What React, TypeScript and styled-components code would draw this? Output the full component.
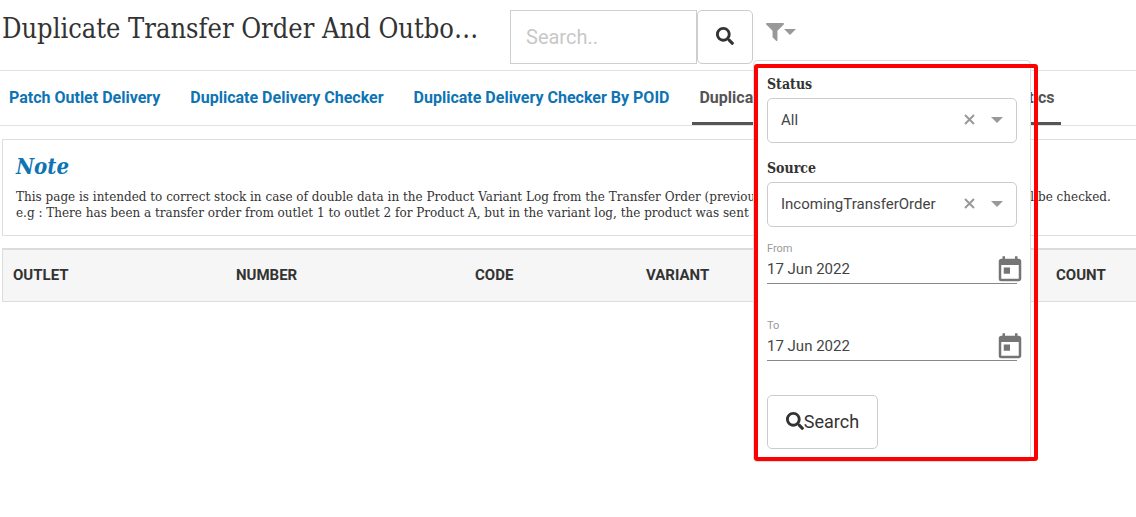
import React, { useState } from 'react';
import styled, { createGlobalStyle } from 'styled-components';
import { MdToday } from 'react-icons/md';

const slab = `'Roboto Slab', 'DejaVu Serif', serif`;
const slabCondensed = `'Roboto Slab', 'DejaVu Serif Condensed', 'DejaVu Serif', serif`;
const sans = `Roboto, 'Liberation Sans', sans-serif`;

const GlobalStyle = createGlobalStyle`
  *, *::before, *::after { box-sizing: border-box; }
  body {
    margin: 0;
    min-height: 100vh;
    background: #fff;
    color: #333;
    font-family: ${sans};
  }
  button, input, select { font-family: inherit; color: inherit; margin: 0; }
  button { cursor: pointer; }
`;

const Header = styled.header`
  display: flex;
  align-items: flex-start;
  height: 71px;
  padding: 10px 0 0 2px;
  border-bottom: 1px solid #e0e1e2;
`;

const Title = styled.h1`
  flex: 0 1 484px;
  min-width: 0;
  margin: 0 24px 0 0;
  font: 400 27px/38px ${slabCondensed};
  overflow: hidden;
  white-space: nowrap;
  text-overflow: ellipsis;
`;

const SearchForm = styled.form`
  display: flex;
  flex: none;
  height: 54px;
`;

const SearchInput = styled.input`
  width: 187px;
  padding: 0 15px;
  border: 1px solid #ccd0d5;
  border-radius: 0;
  background: #fff;
  font-size: 20px;
  outline: none;
  &::placeholder { color: #c8c8c8; opacity: 1; }
`;

const Button = styled.button`
  display: flex;
  align-items: center;
  justify-content: center;
  width: 56px;
  height: 54px;
  padding: 0 0 2px;
  border: 1px solid #ccc;
  border-radius: 5px;
  background: #fff;
  font-size: 18px;
`;

const ApplyButton = styled(Button)`
  width: 111px;
  margin-top: 14px;
`;

const FilterMenu = styled.div`
  position: relative;
  flex: none;
  margin-left: 13px;
`;

const FilterToggle = styled.button`
  display: flex;
  align-items: center;
  height: 44px;
  padding: 0;
  border: 0;
  background: none;
  color: #999;
`;

const Panel = styled.div`
  position: absolute;
  top: 50px;
  left: -13px;
  z-index: 2;
  width: 278px;
  padding: 15px 13px 12px;
  border: 1px solid #ddd;
  border-radius: 4px;
  background: #fff;
`;

const Highlight = styled.div`
  position: absolute;
  inset: 3px -8px 0 0;
  border: 4px solid #f00;
  border-radius: 3px;
  pointer-events: none;
`;

const Field = styled.div`
  & + & { margin-top: 17px; }
`;

const FieldLabel = styled.label`
  display: block;
  height: 22px;
  font: 700 14px/16px ${slabCondensed};
`;

const SelectBox = styled.div`
  display: flex;
  align-items: center;
  height: 45px;
  padding: 0 13px 2px 0;
  border: 1px solid #ccc;
  border-radius: 5px;
  color: #999;
`;

const Select = styled.select`
  flex: 1;
  min-width: 0;
  height: 41px;
  padding: 0 0 0 13px;
  border: 0;
  background: none;
  appearance: none;
  color: #444;
  font-size: 15px;
  outline: none;
`;

const IconButton = styled.button`
  display: flex;
  padding: 0;
  border: 0;
  background: none;
  color: inherit;
`;

const ClearButton = styled(IconButton)`
  margin-right: 16px;
`;

const DateField = styled.div`
  height: 62px;
  margin-top: 15px;
`;

const DateLabel = styled.label`
  display: block;
  font-size: 11px;
  line-height: 13px;
  color: #999;
`;

const DateRow = styled.div`
  display: flex;
  color: #757575;
`;

const DateInput = styled.input`
  width: 100%;
  flex: none;
  height: 29px;
  padding: 0;
  border: 0;
  border-bottom: 1px solid #888;
  background: none;
  color: #444;
  font-size: 15px;
  outline: none;
`;

const CalendarButton = styled(IconButton)`
  flex: none;
  height: 30px;
  margin-left: -22px;
`;

const Tabs = styled.nav`
  display: flex;
  gap: 16px;
  height: 55px;
  padding-left: 2px;
  border-bottom: 1px solid #e0e1e2;
  overflow: hidden;
`;

const Tab = styled.a<{ $active?: boolean }>`
  flex: none;
  height: 54px;
  padding: 0 7px;
  border-bottom: 3px solid ${(p) => (p.$active ? '#555' : 'transparent')};
  color: ${(p) => (p.$active ? '#555' : '#0e74b4')};
  font-size: 16px;
  font-weight: 700;
  line-height: 54px;
  text-decoration: none;
  white-space: nowrap;
`;

const Note = styled.section`
  margin: 13px 0 12px 2px;
  height: 97px;
  padding: 13px 0 0 13px;
  border: 1px solid #dedee2;
  border-right: 0;
  overflow: hidden;
`;

const NoteTitle = styled.h2`
  margin: 0 0 10px;
  color: #0e74b4;
  font: italic 700 22px/26px ${slabCondensed};
`;

const NoteText = styled.p`
  margin: 0;
  font: 400 12px/16px ${slab};
  white-space: nowrap;
`;

const Table = styled.table`
  width: calc(100% - 2px);
  margin-left: 2px;
  border: 1px solid #dcdcdc;
  border-top-width: 2px;
  border-right: 0;
  border-spacing: 0;
  table-layout: fixed;
  background: #f6f6f6;
`;

const HeadCell = styled.th<{ $width?: number }>`
  width: ${(p) => (p.$width ? `${p.$width}px` : 'auto')};
  height: 51px;
  padding: 0 10px 2px;
  font-size: 15px;
  font-weight: 700;
  text-align: left;
`;

const SearchIcon = () => (
  <svg width="18" height="18" viewBox="0 0 512 512" fill="currentColor" aria-hidden="true">
    <path d="M505 442.7L405.3 343c-4.5-4.5-10.6-7-17-7H372c27.6-35.3 44-79.7 44-128C416 93.1 322.9 0 208 0S0 93.1 0 208s93.1 208 208 208c48.3 0 92.7-16.4 128-44v16.3c0 6.4 2.5 12.5 7 17l99.7 99.7c9.4 9.4 24.6 9.4 33.9 0l28.3-28.3c9.4-9.4 9.4-24.6.1-34zM208 336c-70.7 0-128-57.2-128-128 0-70.7 57.2-128 128-128 70.7 0 128 57.2 128 128 0 70.7-57.2 128-128 128z" />
  </svg>
);

const FilterIcon = () => (
  <svg width="18" height="18" viewBox="192 256 1408 1408" fill="currentColor" aria-hidden="true">
    <path d="M1595 295q17 41-14 70l-493 493v742q0 42-39 59-13 5-25 5-27 0-45-19l-256-256q-19-19-19-45v-486l-493-493q-31-29-14-70 17-39 59-39h1280q42 0 59 39z" />
  </svg>
);

const Caret = () => (
  <svg width="12" height="6" viewBox="0 0 12 6" fill="currentColor" aria-hidden="true">
    <path d="M0 0h12L6 6z" />
  </svg>
);

const Cross = () => (
  <svg width="11" height="11" viewBox="0 0 11 11" stroke="currentColor" strokeWidth="2" aria-hidden="true">
    <path d="M1 1l9 9M10 1l-9 9" />
  </svg>
);

const tabs = [
  'Patch Outlet Delivery',
  'Duplicate Delivery Checker',
  'Duplicate Delivery Checker By POID',
  'Duplicate Transfer Order And Outbound Statistics',
];

const columns: { name: string; width?: number }[] = [
  { name: 'OUTLET', width: 223 },
  { name: 'NUMBER', width: 239 },
  { name: 'CODE', width: 171 },
  { name: 'VARIANT', width: 171 },
  { name: 'SOURCE' },
  { name: 'COUNT', width: 90 },
];

function SelectField({ id, label, options }: { id: string; label: string; options: string[] }) {
  const [value, setValue] = useState(options[0]);
  return (
    <Field>
      <FieldLabel htmlFor={id}>{label}</FieldLabel>
      <SelectBox>
        <Select id={id} value={value} onChange={(e) => setValue(e.target.value)}>
          <option value="" />
          {options.map((o) => (
            <option key={o}>{o}</option>
          ))}
        </Select>
        <ClearButton type="button" aria-label={`Clear ${label}`} onClick={() => setValue('')}>
          <Cross />
        </ClearButton>
        <Caret />
      </SelectBox>
    </Field>
  );
}

function DatePicker({ id, label }: { id: string; label: string }) {
  return (
    <DateField>
      <DateLabel htmlFor={id}>{label}</DateLabel>
      <DateRow>
        <DateInput id={id} defaultValue="17 Jun 2022" />
        <CalendarButton type="button" aria-label={`Choose ${label} date`}>
          <MdToday size={30} />
        </CalendarButton>
      </DateRow>
    </DateField>
  );
}

export default function App() {
  const [open, setOpen] = useState(true);
  return (
    <>
      <GlobalStyle />
      <Header>
        <Title>Duplicate Transfer Order And Outbound Statistics</Title>
        <SearchForm onSubmit={(e) => e.preventDefault()}>
          <SearchInput type="text" placeholder="Search.." aria-label="Search" />
          <Button type="submit" aria-label="Search">
            <SearchIcon />
          </Button>
        </SearchForm>
        <FilterMenu>
          <FilterToggle type="button" aria-label="Filter" aria-expanded={open} onClick={() => setOpen(!open)}>
            <FilterIcon />
            <Caret />
          </FilterToggle>
          {open && (
            <Panel>
              <SelectField id="status" label="Status" options={['All']} />
              <SelectField id="source" label="Source" options={['IncomingTransferOrder']} />
              <DatePicker id="from" label="From" />
              <DatePicker id="to" label="To" />
              <ApplyButton type="button">
                <SearchIcon />
                Search
              </ApplyButton>
              <Highlight />
            </Panel>
          )}
        </FilterMenu>
      </Header>
      <Tabs>
        {tabs.map((t, i) => (
          <Tab key={t} href="#" $active={i === 3}>
            {t}
          </Tab>
        ))}
      </Tabs>
      <main>
        <Note>
          <NoteTitle>Note</NoteTitle>
          <NoteText>
            This page is intended to correct stock in case of double data in the Product Variant Log from the Transfer
            Order (previously sent). Only the data for selected dates will be checked.
          </NoteText>
          <NoteText>
            e.g : There has been a transfer order from outlet 1 to outlet 2 for Product A, but in the variant log, the
            product was sent 2 times.
          </NoteText>
        </Note>
        <Table>
          <thead>
            <tr>
              {columns.map((c) => (
                <HeadCell key={c.name} scope="col" $width={c.width}>
                  {c.name}
                </HeadCell>
              ))}
            </tr>
          </thead>
        </Table>
      </main>
    </>
  );
}
